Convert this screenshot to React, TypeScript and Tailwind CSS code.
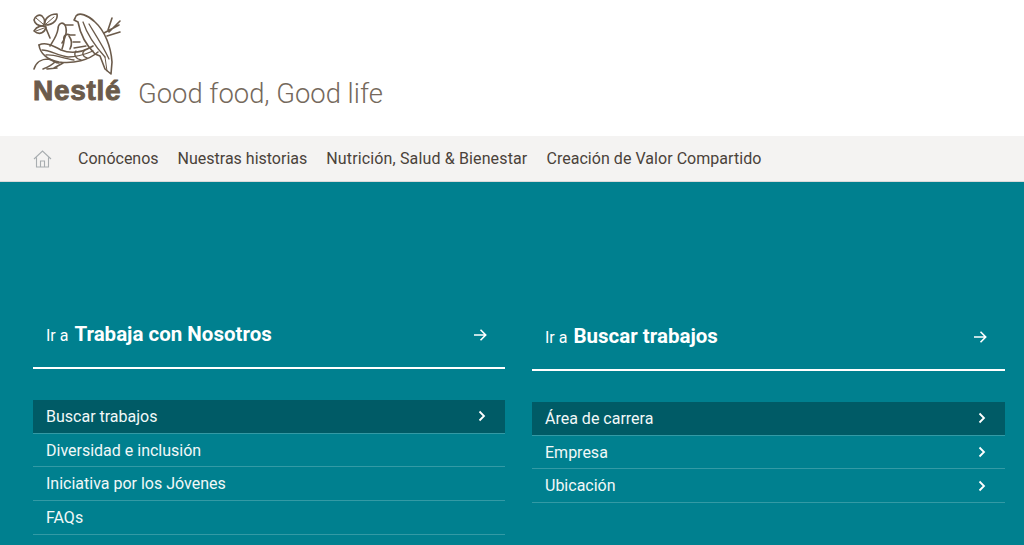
import React from "react";

const font = { fontFamily: "Roboto, 'Liberation Sans', sans-serif" };

function Logo() {
  return (
    <svg width="90" height="62" viewBox="0 0 90 62" fill="none" stroke="#6b5b4b" strokeWidth="1.6" strokeLinecap="round" strokeLinejoin="round" className="block">
      {/* leaves */}
      <path d="M1 7 C2 3 6 1 9 3 C12 6 12 10 10 13 C6 13 2 11 1 7 Z" />
      <path d="M3 5 L10 11" strokeWidth="1" />
      <path d="M12 12 C11 7 15 1 24 1 C25 6 21 12 12 12 Z" />
      <path d="M13 11 L21 4" strokeWidth="1" />
      <path d="M1 18 C4 13 9 12 13 14 C12 19 7 23 1 18 Z" />
      <path d="M3 18 L11 15" strokeWidth="1" />
      <path d="M12 13 L17 25" />
      {/* adult bird */}
      <path d="M41 7 L45 9 C47 20 53 32 62 41 L67 43 L72 56 L78 61 L79 49 C78 34 72 18 62 9 C55 2 46 -1 43 3 C42 5 42 6 41 7 Z" />
      <path d="M50 9 C54 21 62 33 72 44" strokeWidth="1.3" />
      <path d="M56 11 C62 21 70 33 76 46" strokeWidth="1.3" />
      <path d="M72 44 L74 58" strokeWidth="1" />
      {/* twig */}
      <path d="M71 20 L86 12 M75 17 L79 5 M76 19 L87 8 M74 23 L87 19" />
      {/* chick 1 */}
      <path d="M40 12 L32 12 C29 8 25 11 25 16 C24 23 20 28 17 33" />
      <path d="M32 12 C35 18 32 26 29 30" />
      {/* chick 2 */}
      <path d="M42 22 L37 22 C33 20 30 23 31 27 C31 30 30 33 29 36" />
      <path d="M36 23 C39 27 39 32 37 36" />
      <path d="M40 29 L47 29 M41 35 L53 33" strokeWidth="1.3" />
      {/* nest */}
      <path d="M6 32 C12 29 19 32 28 37 C38 41 50 39 60 33" />
      <path d="M6 32 C7 41 15 47 26 49 C41 51 56 47 65 39" />
      <path d="M9 37 C17 37 25 43 35 44 C45 44 53 41 60 38" strokeWidth="1.3" />
      <path d="M13 42 C22 41 30 46 41 47" strokeWidth="1.3" />
      <path d="M43 38 C40 42 43 46 48 47" strokeWidth="1.3" />
      <path d="M52 37 C48 40 50 44 54 45" strokeWidth="1.3" />
      {/* branch */}
      <path d="M1 56 C3 49 9 46 15 46 C20 47 22 50 26 50 M10 56 C15 54 19 52 22 49 M21 55 L30 50 M14 56 L24 55" />
    </svg>
  );
}

function Row({ label, active, chevron }: { label: string; active?: boolean; chevron?: boolean }) {
  return (
    <div className={`flex h-[33.7px] items-center justify-between border-b border-[#339aa5] pl-[13px] pr-[17px] text-[16px] text-[#f2f8f8] ${active ? "bg-[#005B66]" : ""}`}>
      <span className="pt-[1px]">{label}</span>
      {chevron && (
        <svg width="12" height="12" viewBox="0 0 12 12" fill="none" stroke="#fff" strokeWidth="1.8">
          <path d="M3.5 1.5 L8 6 L3.5 10.5" />
        </svg>
      )}
    </div>
  );
}

function Column({ title, items, chevrons, className }: { title: string; items: string[]; chevrons: boolean[]; className: string }) {
  return (
    <div className={className}>
      <div className="flex h-[79px] items-start justify-between border-b-2 border-white pl-[13px] pr-[18px] pt-[29px] text-white">
        <div className="flex items-baseline gap-[6px]">
          <span className="text-[16px]">Ir a</span>
          <span className="text-[20.5px] font-bold">{title}</span>
        </div>
        <svg width="14" height="14" viewBox="0 0 14 14" fill="none" stroke="#fff" strokeWidth="1.6" className="mt-[9px]">
          <path d="M1 7 H12.5 M7.5 1.8 L12.7 7 L7.5 12.2" />
        </svg>
      </div>
      <div className="mt-[31px]">
        {items.map((t, i) => (
          <Row key={t} label={t} active={i === 0} chevron={chevrons[i]} />
        ))}
      </div>
    </div>
  );
}

export default function App() {
  return (
    <div className="flex h-[545px] w-[1024px] flex-col overflow-hidden bg-[#00808F]" style={font}>
      <header className="flex h-[136px] shrink-0 items-end bg-white pb-[33px] pl-[33px]">
        <div className="flex flex-col">
          <Logo />
          <div
            className="mt-[4px] h-[24px] text-[28px] font-bold leading-[24px] tracking-[0.7px] text-[#6b5b4b] [-webkit-text-stroke:0.9px_#6b5b4b]"
            style={{ fontFamily: "'Liberation Sans', sans-serif" }}
          >
            Nestlé
          </div>
        </div>
        <span className="mb-[-7px] ml-[15px] text-[27.4px] font-light leading-[32px] text-[#75695c]">Good food, Good life</span>
      </header>
      <nav className="flex h-[46px] shrink-0 items-center border-b border-[#d9d9d9] bg-[#F4F3F2] pl-[33px] text-[16px] text-[#4a423a]">
        <svg width="19" height="18" viewBox="0 0 19 18" fill="none" stroke="#a8adb0" strokeWidth="1.1" className="mr-[26px]">
          <path d="M1 9 L9.5 1 L18 9 M3.5 7.5 V17 H15.5 V7.5 M7.5 17 V11 H11.5 V17" />
        </svg>
        <div className="flex gap-[19px] pt-[1px]">
          <span>Conócenos</span>
          <span>Nuestras historias</span>
          <span className="tracking-[0.14px]">Nutrición, Salud &amp; Bienestar</span>
          <span className="tracking-[0.04px]">Creación de Valor Compartido</span>
        </div>
      </nav>
      <main className="flex items-start pl-[33px] pt-[108px]">
        <Column
          title="Trabaja con Nosotros"
          items={["Buscar trabajos", "Diversidad e inclusión", "Iniciativa por los Jóvenes", "FAQs"]}
          chevrons={[true, false, false, false]}
          className="w-[472px]"
        />
        <Column
          title="Buscar trabajos"
          items={["Área de carrera", "Empresa", "Ubicación"]}
          chevrons={[true, true, true]}
          className="ml-[27px] mt-[2px] w-[473px]"
        />
      </main>
    </div>
  );
}
